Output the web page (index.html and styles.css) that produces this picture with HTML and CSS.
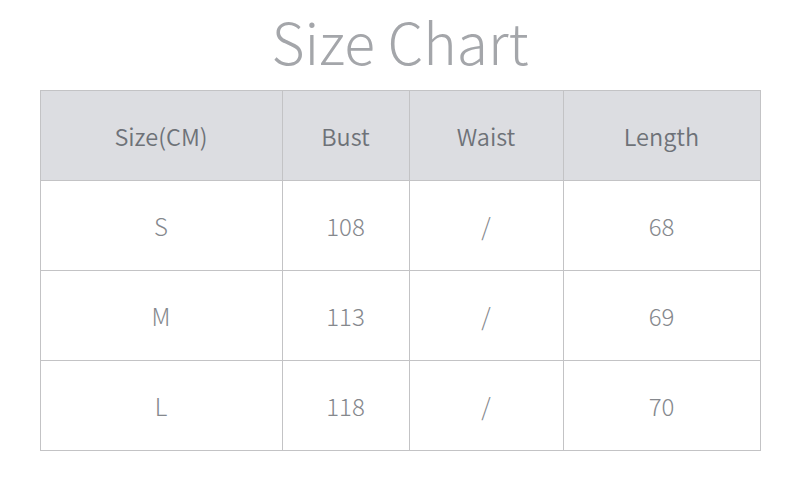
FILE: index.html
```html
<!DOCTYPE html>
<html>
<head>
<meta charset="utf-8">
<link rel="stylesheet" href="styles.css">
</head>
<body>
<div class="page">
  <h1 class="title">Size Chart</h1>
  <table class="chart">
    <colgroup>
      <col class="c1"><col class="c2"><col class="c3"><col class="c4">
    </colgroup>
    <thead>
      <tr><th>Size(CM)</th><th>Bust</th><th>Waist</th><th>Length</th></tr>
    </thead>
    <tbody>
      <tr><td>S</td><td>108</td><td>/</td><td>68</td></tr>
      <tr><td>M</td><td>113</td><td>/</td><td>69</td></tr>
      <tr><td>L</td><td>118</td><td>/</td><td>70</td></tr>
    </tbody>
  </table>
</div>
</body>
</html>
```

FILE: styles.css
```css
html, body {
  margin: 0;
  padding: 0;
  background: #ffffff;
}
.page {
  width: 800px;
  height: 500px;
  display: flex;
  flex-direction: column;
  align-items: center;
  font-family: "Noto Sans CJK SC", "Source Sans Pro", "Noto Sans", sans-serif;
}
.title {
  margin: 0;
  height: 90px;
  line-height: 80px;
  font-size: 57px;
  font-weight: 300;
  color: #a4a6aa;
}
.chart {
  width: 720px;
  border-collapse: collapse;
  table-layout: fixed;
}
.c1 { width: 242px; }
.c2 { width: 127px; }
.c3 { width: 154px; }
.c4 { width: 197px; }
.chart th, .chart td {
  border: 1px solid #c3c3c5;
  text-align: center;
  height: 89px;
  padding: 0;
  font-size: 24px;
}
.chart th {
  background: #dcdde1;
  font-weight: 350;
  font-size: 23.5px;
  color: #6e7278;
}
.chart td {
  font-weight: 300;
  color: #85888d;
}
```
